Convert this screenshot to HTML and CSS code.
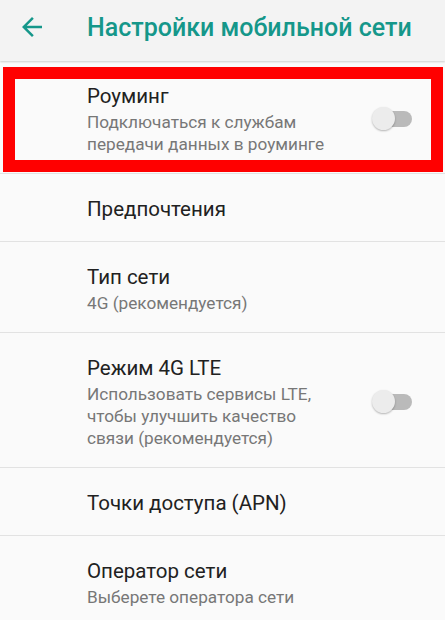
FILE: index.html
```html
<!DOCTYPE html>
<html lang="ru">
<head>
<meta charset="utf-8">
<title>Настройки мобильной сети</title>
<link rel="stylesheet" href="styles.css">
</head>
<body>
<div class="screen">
  <header class="appbar">
    <svg class="back" viewBox="0 0 24 24" width="30" height="30" aria-hidden="true">
      <path d="M20 11H7.83l5.59-5.59L12 4l-8 8 8 8 1.41-1.41L7.83 13H20v-2z" fill="#15978a"/>
    </svg>
    <h1 class="title">Настройки мобильной сети</h1>
  </header>
  <main class="list">
    <div class="row">
      <div class="text">
        <div class="primary">Роуминг</div>
        <div class="secondary">Подключаться к службам<br>передачи данных в роуминге</div>
      </div>
      <div class="switch"><span class="track"></span><span class="thumb"></span></div>
    </div>
    <div class="row">
      <div class="text"><div class="primary">Предпочтения</div></div>
    </div>
    <div class="row">
      <div class="text">
        <div class="primary">Тип сети</div>
        <div class="secondary">4G (рекомендуется)</div>
      </div>
    </div>
    <div class="row">
      <div class="text">
        <div class="primary">Режим 4G LTE</div>
        <div class="secondary">Использовать сервисы LTE,<br>чтобы улучшить качество<br>связи (рекомендуется)</div>
      </div>
      <div class="switch"><span class="track"></span><span class="thumb"></span></div>
    </div>
    <div class="row">
      <div class="text"><div class="primary">Точки доступа (APN)</div></div>
    </div>
    <div class="row">
      <div class="text">
        <div class="primary">Оператор сети</div>
        <div class="secondary">Выберете оператора сети</div>
      </div>
    </div>
  </main>
  <div class="highlight"></div>
</div>
</body>
</html>
```
FILE: styles.css
```css
html, body {
  margin: 0;
  padding: 0;
  background: #fafafa;
}
body {
  font-family: Roboto, "Noto Sans", "Liberation Sans", sans-serif;
  width: 445px;
  height: 620px;
  overflow: hidden;
}
.screen {
  position: relative;
  width: 445px;
  height: 620px;
  background: #fafafa;
}
.appbar {
  height: 61px;
  background: #f3f3f3;
  display: flex;
  align-items: center;
  box-shadow: 0 1px 2px rgba(0,0,0,0.18);
  position: relative;
  z-index: 1;
}
.back {
  margin-left: 17px;
  margin-top: -8px;
  flex: none;
}
.title {
  margin: 0 0 0 40px;
  margin-top: -6px;
  font-size: 25px;
  font-weight: 500;
  color: #15978a;
  letter-spacing: 0;
  white-space: nowrap;
}
.row {
  display: flex;
  align-items: center;
  padding: 22px 33px 18px 87px;
  border-bottom: 1px solid #e2e2e2;
}
.text {
  flex: 1;
  min-width: 0;
}
.primary {
  font-size: 20.5px;
  line-height: 27px;
  color: #212121;
}
.secondary {
  margin-top: 1px;
  font-size: 17.2px;
  line-height: 22px;
  color: #777777;
}
.switch {
  position: relative;
  width: 40px;
  height: 24px;
  flex: none;
}
.track {
  position: absolute;
  left: 8px;
  right: 0;
  top: 4px;
  height: 16px;
  border-radius: 8px;
  background: #bababa;
}
.thumb {
  position: absolute;
  left: 0;
  top: 0;
  width: 23px;
  height: 23px;
  border-radius: 50%;
  background: #ececec;
  box-shadow: 0 1px 2px rgba(0,0,0,0.28);
}
.highlight {
  position: absolute;
  left: 3px;
  top: 67px;
  width: 416px;
  height: 81px;
  border: 12px solid #ff0000;
  z-index: 2;
}
```
